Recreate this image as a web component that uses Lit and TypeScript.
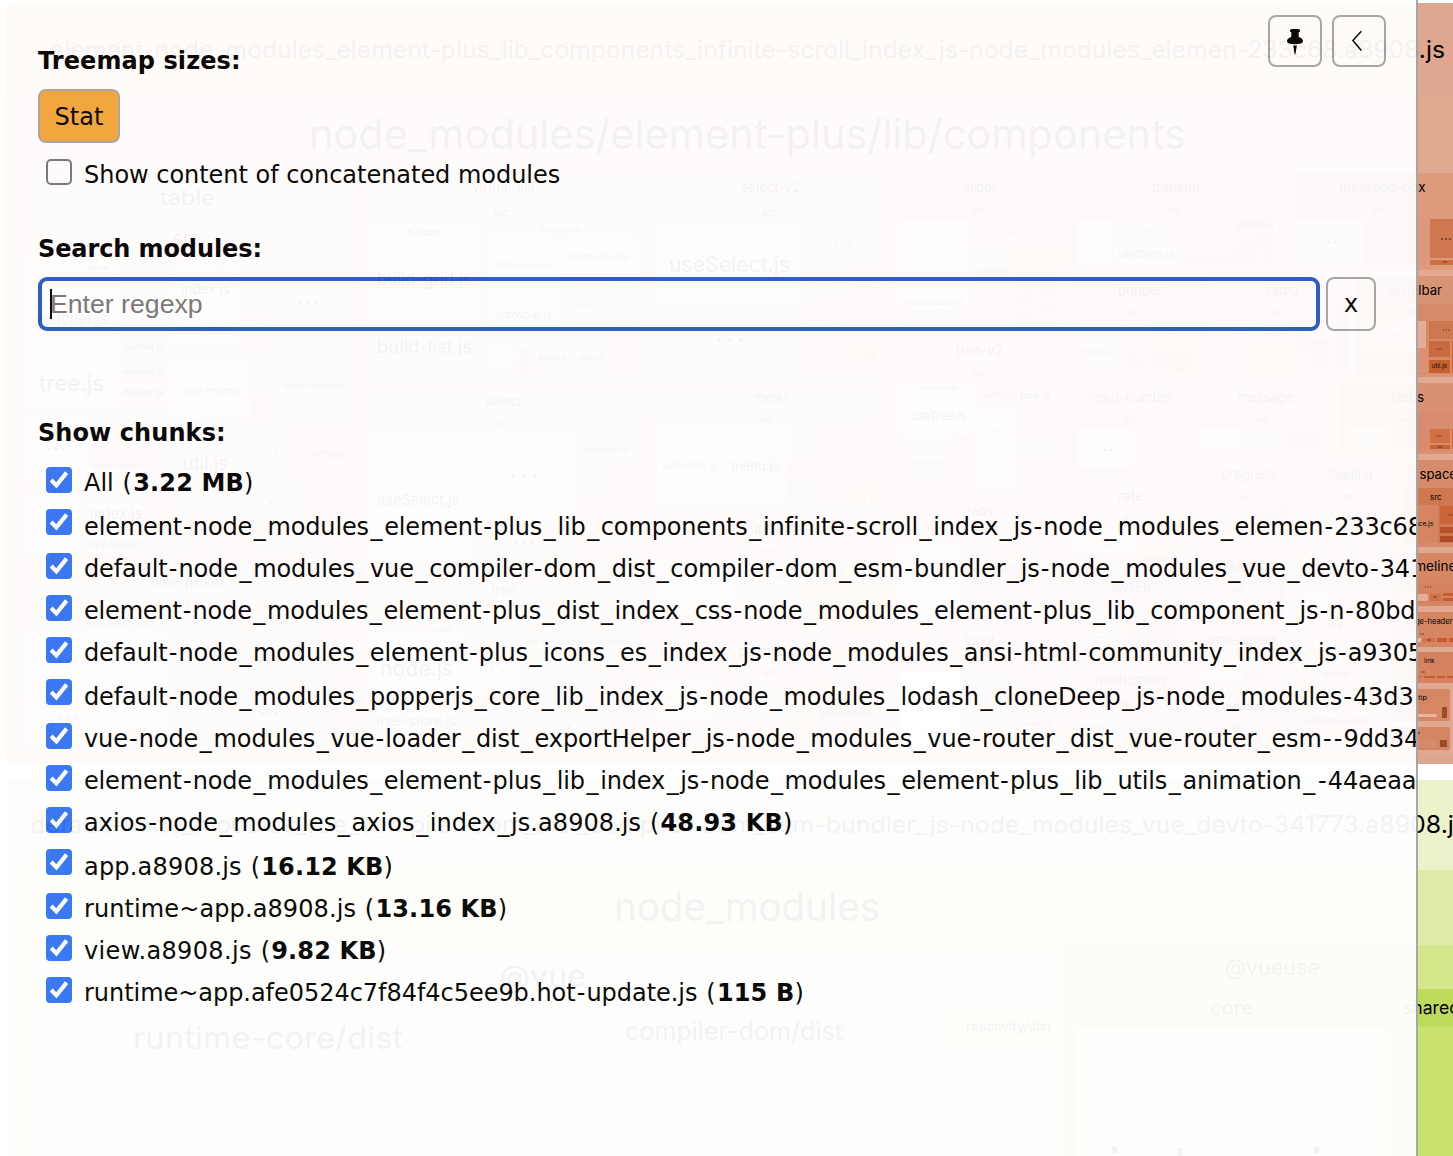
import { LitElement, html, svg, css } from "lit";
import { customElement } from "lit/decorators.js";

type Cell = [x: number, y: number, w: number, h: number, fill: string];
type Label = [text: string, x0: number, x1: number, baseline: number, size: number];
type Dots = [cx: number, cy: number, spread: number];

const GAP = "#e2a991";
const HEAD = "#dc987b";
const BODY = "#d5886a";
const PALE = "#ffffff";
const SOFT = "#f2d8cc";
const DEEP = "#c85f35";

const BASE_CELLS: Cell[] = [
  [6, 3, 1447, 761, "#dfa78f"],
  [6, 3, 1410, 761, "#ffb98c"],
  [15, 96, 1438, 659, GAP],
  [15, 96, 1401, 659, "#fbc0b0"],
  [26, 259, 91, 103, "#fff4f0"],
  [901, 672, 60, 74, PALE],
  [6, 780, 1447, 376, "#ebf3cb"],
  [15, 870, 1438, 286, "#dfeba8"],
  [24, 945, 1041, 211, "#e3efb4"], [1065, 945, 388, 211, "#d4e78c"],
  [26, 1064, 487, 92, "#f8fbea"], [518, 1054, 432, 102, "#f8fbea"], [956, 1010, 105, 34, "#d8e49a"],
  [956, 1044, 105, 112, "#eef5d2"], [1076, 1028, 310, 128, "#f2f8ea"],
  [1391, 989, 62, 38, "#bfdb5c"], [1391, 1027, 62, 129, "#c9e16f"],
];

const CELLS: Cell[] = [
  [24, 172, 330, 338, "#f0c4b2"], [118, 259, 52, 103, SOFT],
  [171, 269, 68, 77, "#faf0ec"], [239, 269, 24, 47, SOFT], [239, 318, 24, 28, HEAD],
  [171, 360, 79, 58, "#f8ece6"], [118, 362, 51, 20, SOFT], [118, 382, 51, 20, "#e5b39d"],
  [26, 362, 91, 42, "#ecd6dc"], [251, 397, 21, 23, HEAD], [26, 416, 60, 64, PALE],
  [86, 416, 83, 26, SOFT], [86, 442, 60, 40, "#e5b39d"], [147, 416, 22, 64, "#dfa58c"],
  [26, 494, 53, 60, PALE], [80, 494, 72, 60, SOFT], [153, 494, 16, 60, HEAD],
  [171, 426, 78, 90, SOFT], [251, 426, 50, 56, "#f0d0c3"], [302, 426, 48, 56, "#e8bba8"],
  [171, 520, 34, 34, SOFT], [208, 541, 30, 13, BODY], [242, 486, 70, 68, "#eec8b8"],
  [315, 486, 34, 54, "#e5b39d"], [315, 542, 22, 12, HEAD], [339, 542, 10, 12, HEAD],
  [20, 565, 335, 190, "#f0c4b2"], [26, 631, 85, 64, PALE], [112, 631, 55, 92, "#f6e6df"],
  [26, 696, 85, 50, "#f8eee9"], [112, 725, 55, 20, "#edc9ba"], [213, 627, 110, 90, "#f3dbd0"],
  [325, 627, 15, 88, HEAD], [325, 717, 15, 14, BODY], [173, 717, 24, 20, SOFT],
  [364, 172, 282, 214, "#f0c4b2"], [367, 222, 113, 94, "#f8ecee"], [367, 317, 113, 60, SOFT],
  [485, 222, 155, 112, "#dceadf"], [487, 237, 73, 56, PALE], [563, 237, 73, 40, "#f0d0c3"],
  [563, 277, 46, 56, "#e5b39d"], [610, 277, 27, 56, HEAD], [487, 295, 74, 38, "#faf4f0"],
  [487, 348, 30, 15, PALE], [487, 365, 30, 10, "#d3d8d0"], [519, 349, 11, 27, "#ec5868"],
  [534, 340, 37, 36, "#dddfcc"], [573, 340, 35, 36, "#f0c8a0"], [610, 340, 27, 36, "#e8a091"],
  [649, 172, 244, 214, "#f0c4b2"], [657, 222, 145, 82, PALE], [657, 305, 145, 68, SOFT],
  [804, 222, 80, 46, "#efd0c4"], [805, 269, 42, 32, "#dfcfb8"], [849, 269, 34, 32, HEAD],
  [805, 303, 30, 32, HEAD], [837, 303, 24, 16, BODY], [864, 303, 18, 16, BODY],
  [805, 336, 30, 18, BODY], [837, 339, 20, 14, BODY], [858, 339, 24, 9, BODY],
  [805, 357, 30, 15, BODY], [837, 357, 20, 15, BODY], [858, 350, 18, 10, DEEP], [858, 362, 18, 9, BODY],
  [364, 388, 282, 186, "#f0c4b2"], [366, 434, 104, 125, PALE], [472, 434, 104, 84, "#faf1ee"],
  [472, 520, 104, 38, SOFT], [578, 434, 57, 34, SOFT], [579, 468, 27, 30, "#dcdccf"],
  [609, 468, 25, 30, HEAD], [579, 501, 27, 22, HEAD], [609, 501, 25, 22, BODY],
  [579, 545, 18, 20, HEAD], [599, 545, 35, 8, BODY], [599, 555, 26, 10, BODY], [641, 416, 3, 148, HEAD],
  [364, 578, 282, 176, "#f0c4b2"], [367, 637, 98, 60, PALE], [466, 647, 50, 48, "#f8ecee"],
  [518, 647, 90, 60, SOFT], [608, 664, 30, 50, HEAD], [367, 700, 98, 44, SOFT],
  [518, 710, 90, 34, "#ebc5b5"], [608, 717, 30, 26, BODY], [503, 706, 12, 38, "#d5dccb"],
  [649, 388, 240, 126, "#f0c4b2"], [657, 427, 65, 75, PALE], [724, 427, 64, 75, "#f8efec"],
  [790, 427, 31, 30, SOFT], [790, 458, 31, 21, HEAD], [790, 480, 31, 22, "#d9a17e"],
  [824, 427, 27, 25, HEAD], [852, 427, 22, 25, HEAD], [824, 454, 20, 18, BODY],
  [846, 454, 27, 7, BODY], [846, 464, 27, 7, BODY], [824, 474, 20, 14, BODY],
  [846, 474, 27, 7, BODY], [846, 484, 22, 8, BODY], [824, 491, 20, 11, BODY],
  [846, 495, 20, 7, DEEP], [870, 484, 4, 18, DEEP], [879, 411, 7, 94, HEAD],
  [652, 518, 237, 112, "#e8b29b"], [655, 558, 80, 56, PALE], [737, 558, 72, 56, SOFT],
  [812, 558, 38, 28, SOFT], [812, 588, 38, 36, BODY], [852, 583, 30, 42, BODY],
  [652, 635, 237, 118, "#e6ad95"], [657, 682, 53, 38, PALE], [712, 682, 30, 38, SOFT],
  [744, 682, 40, 38, "#f6e5dd"], [814, 682, 62, 50, "#e0a88f"], [790, 706, 18, 24, BODY],
  [896, 172, 171, 160, "#e5b39d"], [901, 202, 156, 125, HEAD], [901, 219, 69, 90, "#f8f0fa"],
  [970, 219, 87, 26, SOFT], [970, 247, 46, 46, "#eec8b8"], [1018, 249, 39, 20, HEAD],
  [1018, 271, 39, 14, BODY], [901, 278, 67, 46, "#f0d4c8"], [972, 294, 44, 30, "#e4b09a"],
  [1017, 289, 17, 17, BODY], [1037, 289, 20, 11, BODY], [1037, 304, 20, 10, BODY],
  [1017, 310, 17, 14, BODY], [1037, 317, 20, 8, BODY],
  [896, 336, 171, 154, "#eec0ae"], [900, 383, 74, 52, "#fcf8f6"], [900, 437, 55, 47, "#eec8b8"],
  [957, 437, 17, 48, HEAD], [977, 411, 37, 75, "#f6e3da"], [1015, 412, 42, 24, "#e3ad97"],
  [1015, 439, 42, 22, "#e0a58d"], [1015, 464, 29, 10, BODY], [1046, 464, 11, 22, BODY], [1015, 477, 29, 9, BODY],
  [896, 496, 171, 122, "#eabca8"], [901, 544, 60, 76, "#f9edf0"], [1028, 545, 28, 36, HEAD], [1028, 590, 28, 12, BODY],
  [896, 626, 171, 46, "#e6b29d"], [962, 672, 58, 58, SOFT], [1021, 672, 34, 50, HEAD],
  [1070, 173, 213, 96, HEAD], [1074, 201, 205, 66, "#e0a58d"], [1075, 219, 37, 46, PALE],
  [1113, 219, 68, 46, "#faf6f2"], [1183, 219, 49, 29, "#e4b39e"], [1183, 250, 49, 15, BODY],
  [1234, 219, 39, 12, BODY], [1234, 234, 21, 15, BODY], [1257, 234, 15, 12, DEEP],
  [1234, 251, 21, 14, DEEP], [1257, 249, 16, 11, BODY], [1257, 262, 16, 3, DEEP], [1278, 202, 3, 65, "#e3604b"],
  [1289, 173, 164, 97, "#dd9a7d"], [1295, 219, 68, 46, "#fbf5f1"], [1364, 219, 62, 46, "#dc987b"],
  [1430, 219, 23, 39, "#cf7751"], [1430, 260, 23, 5, "#cf7040"],
  [1070, 276, 137, 101, "#d89070"], [1076, 321, 44, 52, "#faf6f2"], [1121, 321, 30, 30, SOFT],
  [1152, 321, 44, 25, HEAD], [1123, 353, 16, 18, BODY], [1140, 353, 9, 18, BODY],
  [1152, 348, 42, 24, BODY], [1172, 358, 17, 13, DEEP], [1202, 304, 5, 70, BODY],
  [1214, 276, 135, 101, "#d99477"], [1218, 321, 40, 26, SOFT], [1218, 349, 40, 24, "#e2aa94"],
  [1260, 349, 32, 24, HEAD], [1294, 321, 14, 34, BODY], [1309, 340, 23, 8, DEEP],
  [1309, 350, 18, 22, BODY], [1337, 304, 10, 70, BODY],
  [1356, 276, 97, 101, "#d99477"], [1360, 304, 93, 70, "#d58a68"], [1362, 321, 64, 27, "#e5ad95"],
  [1418, 348, 10, 25, "#da9172"], [1429, 321, 24, 18, "#cd7850"], [1429, 341, 21, 16, "#ca6a40"],
  [1429, 360, 21, 13, "#c6602f"], [1452, 341, 1, 32, "#c6602f"],
  [1070, 384, 120, 91, "#dda083"], [1075, 428, 60, 40, PALE], [1137, 429, 38, 29, "#e08f80"],
  [1137, 461, 38, 9, BODY], [1177, 429, 3, 41, BODY], [1186, 411, 3, 60, HEAD],
  [1199, 384, 136, 70, "#dda083"], [1200, 429, 42, 20, "#fbf7f2"], [1244, 429, 36, 20, SOFT],
  [1282, 429, 21, 20, BODY], [1305, 429, 19, 13, BODY], [1305, 444, 19, 5, DEEP], [1329, 411, 3, 40, HEAD],
  [1341, 383, 112, 71, "#d99073"], [1345, 411, 108, 40, "#d98d70"], [1346, 429, 44, 19, PALE],
  [1391, 429, 35, 19, "#d88a6b"], [1430, 429, 20, 14, "#cf7045"], [1430, 445, 20, 4, "#cb6030"],
  [1452, 429, 1, 20, "#cb6030"],
  [1070, 482, 120, 77, "#e0a68d"], [1076, 529, 60, 25, PALE], [1137, 529, 38, 20, "#e08f80"], [1137, 550, 38, 12, BODY],
  [1199, 461, 101, 84, "#dd9f85"], [1200, 488, 92, 54, "#e0a58d"], [1253, 506, 34, 34, BODY], [1287, 488, 3, 54, DEEP],
  [1306, 461, 90, 84, "#db9a7e"], [1309, 505, 32, 38, SOFT], [1342, 505, 48, 38, HEAD],
  [1402, 460, 51, 87, "#d68b6a"], [1404, 488, 49, 55, "#cf7750"], [1406, 505, 32, 38, "#d58560"],
  [1440, 506, 13, 18, "#cb6539"], [1440, 527, 13, 6, "#b8522c"], [1440, 536, 13, 6, "#ae4a26"],
  [1070, 566, 120, 86, "#dd9f85"], [1076, 612, 50, 34, SOFT], [1126, 612, 52, 34, BODY],
  [1199, 553, 90, 62, "#dc9c80"], [1202, 599, 40, 12, PALE], [1279, 581, 5, 32, DEEP],
  [1295, 553, 90, 62, "#db9a7e"], [1300, 594, 34, 14, PALE], [1353, 594, 20, 12, BODY],
  [1391, 553, 62, 53, "#d68865"], [1394, 583, 59, 20, "#d48260"], [1394, 594, 34, 7, "#e5ad95"],
  [1430, 594, 11, 7, "#cf7045"], [1443, 593, 10, 3, "#c65a30"], [1443, 598, 10, 3, "#c65a30"],
  [1199, 622, 90, 62, "#db997d"], [1202, 670, 42, 12, PALE], [1246, 668, 20, 13, BODY],
  [1295, 612, 84, 46, "#db997d"], [1391, 612, 62, 35, "#d68562"], [1391, 638, 30, 4, "#e9bba7"],
  [1423, 638, 12, 4, "#d0714b"], [1437, 638, 10, 4, "#c65a30"], [1449, 638, 4, 4, "#c65a30"],
  [1070, 658, 120, 96, "#db9a7e"], [1078, 711, 50, 34, SOFT], [1130, 711, 40, 34, HEAD], [1177, 711, 3, 34, BODY],
  [1199, 690, 90, 64, "#da987b"], [1295, 664, 84, 46, "#da987b"], [1391, 652, 62, 31, "#d48260"],
  [1391, 676, 31, 2, "#cd7148"], [1424, 676, 11, 2, "#c65a30"], [1437, 676, 8, 2, "#c65a30"], [1447, 676, 6, 2, "#c65a30"],
  [1390, 689, 60, 32, "#d68865"], [1390, 714, 47, 3, "#e5b5a0"], [1442, 707, 5, 11, "#a04a2c"],
  [1295, 710, 84, 40, "#da987b"], [1390, 727, 60, 23, "#d48562"], [1390, 740, 47, 7, "#d58b6c"], [1440, 740, 7, 7, "#a04a2c"],
];

const LABELS: Label[] = [
  ["element-node_modules_element-plus_lib_components_infinite-scroll_index_js-node_modules_elemen-233c68.a8908.js", 50, 1445, 58, 24],
  ["node_modules/element-plus/lib/components", 309, 1186, 149, 41],
  ["table", 160, 215, 205, 22], ["src", 172, 202, 245, 20], ["builders", 407, 442, 236, 9],
  ["store", 87, 109, 271, 9], ["index.js", 181, 230, 294, 14], ["build-grid.js", 377, 472, 285, 18],
  ["watcher.js", 35, 108, 324, 15], ["render-helper.js", 179, 232, 330, 7], ["build-list.js", 377, 472, 353, 18],
  ["current.js", 123, 164, 350, 9], ["expand.js", 123, 164, 374, 9], ["tree.js", 39, 104, 391, 22],
  ["helper.js", 123, 164, 396, 10], ["style-helper.js", 183, 240, 393, 9], ["table-layout.js", 282, 343, 389, 9],
  ["events-helper.js", 91, 142, 468, 7], ["util.js", 183, 228, 470, 19], ["config.js", 307, 345, 457, 10],
  ["useSelect.js", 377, 459, 505, 15], ["index.js", 90, 142, 519, 15], ["style.helper.js", 86, 146, 548, 10],
  ["time-picker", 151, 224, 587, 14], ["src", 178, 190, 608, 8], ["time-picker-com", 86, 151, 626, 8],
  ["common", 265, 293, 625, 7], ["model", 431, 452, 632, 7], ["node.js", 380, 453, 676, 22],
  ["tree-store.js", 376, 457, 726, 14], ["index.js", 180, 201, 537, 6],
  ["virtual-list", 472, 535, 192, 13], ["select-v2", 741, 800, 192, 13], ["src", 494, 509, 216, 10],
  ["src", 762, 776, 216, 10], ["components", 541, 581, 232, 7], ["dynamic-size-grid.js", 493, 554, 267, 6.5],
  ["dynamic-size-list.js", 568, 629, 259, 6.5], ["useSelect.js", 669, 790, 272, 21], ["scrollbar.js", 495, 552, 319, 11],
  ["props.js", 539, 566, 360, 8], ["utils.js", 579, 603, 360, 8], ["useSliderButton.js", 907, 963, 305, 6.5],
  ["select", 485, 522, 406, 13], ["src", 494, 507, 428, 9], ["menu", 754, 787, 402, 13], ["src", 760, 771, 423, 8],
  ["useOption.js", 583, 629, 453, 8], ["sub-menu.js", 662, 717, 469, 10], ["menu.js", 731, 780, 471, 13],
  ["upload", 750, 792, 533, 13], ["src", 763, 775, 553, 8], ["ajax.js", 819, 843, 575, 7],
  ["tree", 491, 515, 595, 13], ["tree.vue_vue&type=script&lang.js", 527, 631, 644, 7],
  ["pagination", 738, 807, 656, 13], ["src", 763, 775, 676, 8], ["pagination.js", 820, 872, 717, 9],
  ["composables", 919, 957, 390, 6], ["useTree.js", 910, 966, 420, 12], ["useCheck.js", 909, 946, 464, 6.5],
  ["slider", 963, 997, 192, 13], ["transfer", 1152, 1201, 192, 13], ["message-box", 1339, 1425.5, 192, 13],
  ["src", 972, 984, 213, 8], ["src", 1168, 1180, 213, 8], ["src", 1373, 1385, 213, 8],
  ["useCheck.js", 1118, 1174, 258, 11], ["useMove.js", 1237, 1269, 227, 6.5], ["useSlide.js", 977, 1008, 273, 6.5],
  ["popper", 1118, 1162, 295, 13], ["radio", 1267, 1298, 295, 13], ["scrollbar", 1388, 1442, 295, 13],
  ["src", 1130, 1141, 315, 8], ["src", 1271, 1283, 315, 8], ["src", 1406, 1418, 315, 8],
  ["radio.js", 1263, 1286, 337, 7], ["index.js", 1083, 1114, 355, 8], ["tree-v2", 956, 1003, 355, 13], ["src", 973, 984, 376, 8],
  ["util.js", 1431.5, 1447, 368, 6.5],
  ["virtual-tree.js", 984, 1051, 399, 10], ["input-number", 1088, 1173, 402, 13], ["message", 1238, 1293, 402, 13],
  ["steps", 1391, 1424, 402, 13], ["src", 1122, 1133, 423, 8], ["src", 1257, 1268, 423, 8], ["src", 1398, 1409, 423, 8],
  ["progress", 1221, 1276, 479, 13], ["loading", 1328, 1373, 479, 13], ["rate", 1118, 1143, 501, 13],
  ["space", 1419.5, 1457, 479, 13], ["src", 1241, 1251, 500, 8], ["src", 1342, 1353, 500, 8], ["src", 1430, 1441.5, 500, 8],
  ["src", 1122, 1133, 521, 8], ["tabs", 967, 993, 516, 13], ["space.js", 1407, 1433.5, 526, 6.5],
  ["tabs.js", 989, 1018, 573, 12], ["rate.js", 1144, 1169, 560, 7], ["skeleton", 1216, 1268, 571, 13], ["popconfirm", 1305, 1375, 571, 13],
  ["timeline", 1406.5, 1456.5, 571, 13], ["switch", 1110, 1151, 593, 13], ["src", 1232, 1243, 592, 8],
  ["tag", 1328, 1343, 628, 10], ["page-header", 1406, 1452.5, 624, 7.5], ["time-select", 1208, 1276, 644, 12],
  ["input", 965, 995, 645, 13], ["src", 973, 984, 665, 8], ["link", 1424, 1434.5, 663, 6.5],
  ["result", 1323, 1348, 677, 9], ["notification", 1095, 1165, 685, 13], ["popover", 1217, 1265, 711, 12],
  ["infinite-scroll", 1307, 1365, 724, 9], ["tooltip", 1405, 1427, 700, 6.5], ["input.js", 1026, 1051, 726, 7],
  ["notify.js", 1079, 1104, 729, 7], ["src", 1122, 1133, 706, 8], ["src", 1232, 1243, 731, 8],
  ["default-node_modules_vue_compiler-dom_dist_compiler-dom_esm-bundler_js-node_modules_vue_devto-341773.a8908.js", 30, 1467, 833, 24],
  ["node_modules", 614, 880, 921, 40], ["@vue", 499, 586, 987, 30], ["runtime-core/dist", 133, 403, 1049, 31],
  ["compiler-dom/dist", 625, 843, 1040, 25], ["@vueuse", 1225, 1320, 975, 22], ["core", 1210, 1253, 1015, 19],
  ["reactivity/dist", 966, 1051, 1031, 12.5], ["shared", 1403, 1460, 1014, 18], ["index.mjs", 1108, 1352, 1192, 61],
];

const DOTS: Dots[] = [
  [308, 303, 8], [250, 293, 4], [218, 264, 3], [251, 331, 3], [223, 354, 3], [261, 377, 3], [261, 409, 3],
  [730, 340, 11], [843, 245, 7], [584, 306, 6], [623, 306, 4], [825, 285, 4], [865, 285, 4], [820, 317, 4],
  [849, 311, 2], [872, 311, 2], [820, 345, 3], [820, 364, 3], [508, 344, 2], [503, 355, 2], [503, 369, 2], [623, 357, 4],
  [934, 248, 7], [1013, 233, 5], [1036, 259, 3], [1092, 242, 5], [1146, 231, 5], [1207, 233, 4], [1207, 257, 3],
  [1329, 242, 6], [1396, 242, 6], [1446, 239, 4], [1445, 262, 1.3], [1446, 330, 2.6], [1439, 349, 2], [992, 310, 5],
  [1135, 341, 3], [1173, 333, 4], [1239, 334, 4], [1239, 361, 4], [1275, 361, 3], [1393, 334, 5], [1393, 361, 5],
  [524, 476, 11], [524, 542, 8], [592, 484, 4], [622, 484, 3.5], [592, 512, 3.5], [622, 512, 3], [805, 442, 3.5],
  [805, 469, 3.5], [805, 492, 3.5], [837, 440, 3], [864, 440, 2.5], [833, 461, 2.5], [833, 480, 2], [883, 458, 3],
  [995, 431, 5], [995, 470, 5], [1036, 424, 4], [1036, 451, 4], [965, 461, 4], [1105, 450, 6], [1156, 444, 5],
  [1222, 439, 4], [1262, 439, 4], [1368, 439, 4], [1410, 439, 4], [1439, 436, 2], [1440, 447, 1.2], [1451, 515, 2],
  [56, 449, 7], [98, 411, 4], [270, 453, 6], [277, 503, 6], [332, 503, 5], [277, 540, 6], [206, 509, 3],
  [68, 661, 8], [69, 718, 8], [269, 713, 7], [269, 661, 9], [492, 665, 6], [563, 727, 6], [483, 719, 5], [623, 681, 4],
  [743, 687, 4], [727, 723, 3], [930, 708, 8], [1106, 545, 5], [1102, 637, 5], [1153, 637, 5], [776, 577, 6],
  [935, 578, 8], [1125, 728, 4], [1158, 721, 3], [1222, 675, 3], [1336, 586, 3], [1428, 587, 2.5], [1422, 634, 1.6],
  [1423, 672, 1.2], [1435, 597, 1], [1429, 640, 1], [1415, 733, 4],
];

interface Chunk { name: string; tracking: number; size?: string; }

const CHUNKS: Chunk[] = [
  { name: "All", tracking: 0, size: "3.22 MB" },
  { name: "element-node_modules_element-plus_lib_components_infinite-scroll_index_js-node_modules_elemen-233c68", tracking: -0.14 },
  { name: "default-node_modules_vue_compiler-dom_dist_compiler-dom_esm-bundler_js-node_modules_vue_devto-341", tracking: -0.12 },
  { name: "element-node_modules_element-plus_dist_index_css-node_modules_element-plus_lib_component_js-n-80bd", tracking: -0.18 },
  { name: "default-node_modules_element-plus_icons_es_index_js-node_modules_ansi-html-community_index_js-a9305", tracking: -0.13 },
  { name: "default-node_modules_popperjs_core_lib_index_js-node_modules_lodash_cloneDeep_js-node_modules-43d3", tracking: -0.12 },
  { name: "vue-node_modules_vue-loader_dist_exportHelper_js-node_modules_vue-router_dist_vue-router_esm--9dd34", tracking: -0.1 },
  { name: "element-node_modules_element-plus_lib_index_js-node_modules_element-plus_lib_utils_animation_-44aeaa", tracking: -0.16 },
  { name: "axios-node_modules_axios_index_js.a8908.js", tracking: 0.06, size: "48.93 KB" },
  { name: "app.a8908.js", tracking: 0.2, size: "16.12 KB" },
  { name: "runtime~app.a8908.js", tracking: 0.1, size: "13.16 KB" },
  { name: "view.a8908.js", tracking: 0.35, size: "9.82 KB" },
  { name: "runtime~app.afe0524c7f84f4c5ee9b.hot-update.js", tracking: -0.04, size: "115 B" },
];

@customElement("tree-map")
class TreeMap extends LitElement {
  static styles = css`
    :host { display: block; width: 1453px; height: 1156px; }
    .canvas { display: block; font-family: Inter, "Liberation Sans", sans-serif; }
  `;
  private cell([x, y, w, h, fill]: Cell, opacity = 1) {
    return svg`<rect x=${x} y=${y} width=${w} height=${h} rx=${x === 1390 ? 2 : 0} fill=${fill} fill-opacity=${opacity}></rect>`;
  }
  render() {
    return html`<svg class="canvas" width="1453" height="1156" viewBox="0 0 1453 1156">
      ${BASE_CELLS.map(c => this.cell(c))}
      ${CELLS.map(c => this.cell(c, c[0] + c[2] > 1418 ? 1 : 0.5))}
      ${DOTS.map(([cx, cy, d]) => {
        const s = Math.max(0.8, d / 3.2);
        return [-d, 0, d].map(o => svg`<rect x=${cx + o - s / 2} y=${cy - s / 2} width=${s} height=${s} fill="#000"></rect>`);
      })}
      ${LABELS.map(([t, x0, x1, y, size]) => svg`<text x=${x0} y=${y} font-size=${size} textLength=${x1 - x0} lengthAdjust="spacingAndGlyphs">${t}</text>`)}
    </svg>`;
  }
}

@customElement("check-box")
class CheckBox extends LitElement {
  static properties = { checked: { type: Boolean } };
  declare checked: boolean;
  static styles = css`
    :host { display: block; width: 26px; height: 26px; flex: none; }
    .box { box-sizing: border-box; width: 26px; height: 26px; border: 2px solid #767676; border-radius: 5px; background: #fff; }
    .tick { display: block; }
  `;
  render() {
    return this.checked
      ? html`<svg class="tick" width="26" height="26" viewBox="0 0 26 26">
          <rect width="26" height="26" rx="4" fill="#3273f5"></rect>
          <path d="M5.2 13 L10.4 18.4 L20.6 5.6" fill="none" stroke="#fff" stroke-width="4.1"></path>
        </svg>`
      : html`<div class="box"></div>`;
  }
}

@customElement("app-root")
class AppRoot extends LitElement {
  static styles = css`
    :host { display: block; position: relative; width: 1453px; height: 1156px; overflow: hidden; background: #fff; }
    .sidebar {
      position: absolute; left: 0; top: 0; width: 1418px; height: 1156px; box-sizing: border-box;
      padding: 47px 0 0 38px; border-right: 2px solid #a5a5a5; background: #fff; opacity: 0.95;
      overflow: hidden; display: flex; flex-direction: column; color: #000;
      font: 24px/28px Verdana, "DejaVu Sans", sans-serif; font-variant-ligatures: none;
    }
    .heading { font-weight: 700; height: 28px; letter-spacing: 0.08px; }
    .button {
      box-sizing: border-box; border: 2px solid #a5a5a5; border-radius: 8px; background: #fff;
      display: flex; align-items: center; justify-content: center; flex: none;
    }
    .stat { width: 82px; height: 54px; margin-top: 14px; padding-top: 1px; background: #f1a538; }
    .tools { position: absolute; right: 30px; top: 15px; display: flex; gap: 10px; }
    .tool { width: 54px; height: 52px; }
    .row { display: flex; align-items: flex-start; padding-left: 8px; height: 42px; white-space: nowrap; }
    .row check-box { margin-top: -2px; margin-right: 12px; }
    .under { margin-left: 1.6px; letter-spacing: 1.66px; }
    .dash { margin-left: 1.1px; letter-spacing: 1.1px; }
    .size { white-space: pre; letter-spacing: 1.2px; }
    .size b { letter-spacing: 0.15px; }
    .option { margin-top: 18px; height: 28px; letter-spacing: -0.03px; }
    .search-title { margin-top: 46px; letter-spacing: -0.1px; }
    .search { display: flex; gap: 6px; margin-top: 14px; position: relative; }
    .field {
      box-sizing: border-box; width: 1282px; height: 54px; margin: 0; border: 4px solid #245ac4; border-radius: 9px;
      padding: 0 8px; outline: none; background: #fff; font: 26.67px "Liberation Sans", sans-serif;
    }
    .field::placeholder { color: #757575; opacity: 1; }
    .caret { position: absolute; left: 12px; top: 12px; width: 2px; height: 30px; background: #000; }
    .clear { width: 50px; height: 54px; }
    .chunks-title { margin-top: 88px; }
    .chunks { margin-top: 22px; }
    .chunks .row:nth-child(4n + 1) { height: 44px; }
    .chunks .row:nth-child(4n + 2) check-box { margin-top: -4px; }
  `;
  private name(c: Chunk) {
    const parts = c.name.split(/([_-])/).filter(p => p !== "");
    return html`<span style="letter-spacing:${c.tracking}px">${parts.map(p =>
      p === "_" ? html`<span class="under">_</span>` : p === "-" ? html`<span class="dash">-</span>` : p)}</span>`;
  }
  render() {
    return html`
      <tree-map></tree-map>
      <div class="sidebar">
        <div class="tools">
          <div class="button tool"><svg width="50" height="48" viewBox="0 0 50 48">
            <path d="M19.8 13.5 Q20 12 22 12 H28 Q30 12 30.2 13.5 Q30.2 15 28.6 15.4 L28.8 20 Q33 21.3 33 24 Q33 27.3 25 27.3 Q17 27.3 17 24 Q17 21.3 21.2 20 L21.4 15.4 Q19.8 15 19.8 13.5 Z M23.2 28.4 H26.9 L25.3 37.4 H24.7 Z" fill="#000"></path>
          </svg></div>
          <div class="button tool"><svg width="50" height="48" viewBox="0 0 50 48">
            <path d="M27.3 14.3 L18.9 23.6 L27.3 33.4" fill="none" stroke="#000" stroke-width="1.5"></path>
          </svg></div>
        </div>
        <div class="heading">Treemap sizes:</div>
        <div class="button stat">Stat</div>
        <div class="row option"><check-box></check-box><span>Show content of concatenated modules</span></div>
        <div class="heading search-title">Search modules:</div>
        <div class="search">
          <input class="field" placeholder="Enter regexp" />
          <i class="caret"></i>
          <div class="button clear">x</div>
        </div>
        <div class="heading chunks-title">Show chunks:</div>
        <div class="chunks">
          ${CHUNKS.map(c => html`<div class="row"><check-box checked></check-box>${this.name(c)}${c.size ? html`<span class="size"> (<b>${c.size}</b>)</span>` : ""}</div>`)}
        </div>
      </div>`;
  }
}
